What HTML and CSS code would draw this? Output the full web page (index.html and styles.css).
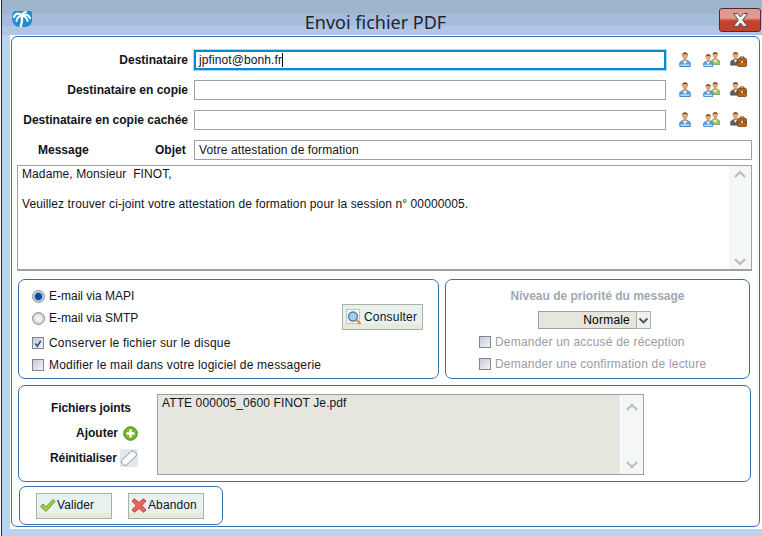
FILE: index.html
```html
<!DOCTYPE html>
<html lang="fr">
<head>
<meta charset="utf-8">
<title>Envoi fichier PDF</title>
<link rel="stylesheet" href="styles.css">
</head>
<body>
<svg class="defs" width="0" height="0">
  <defs>
    <symbol id="p-blue" viewBox="0 0 12 16">
      <path d="M.8 15.500V11.500L3.500 9.500H8.500L11.200 11.500V15.500Z" fill="#5aa4e8" stroke="#2f6db4" stroke-width=".8"/>
      <path d="M3.800 9.500H8.200L6 13.500Z" fill="#f4faff"/>
      <path d="M1.500 13.500H10.500V14.800H1.500Z" fill="#cfe6fa"/>
      <rect x="4.500" y="7" width="3" height="3" fill="#c98f62"/>
      <ellipse cx="6" cy="4.500" rx="2.800" ry="3.300" fill="#e0a878"/>
      <path d="M3 5C2.400 .2 9.600 .2 9 5L8 3H4Z" fill="#6b3d18"/>
    </symbol>
    <symbol id="p-green" viewBox="0 0 12 16">
      <path d="M.8 15.500V11.500L3.500 9.500H8.500L11.200 11.500V15.500Z" fill="#9cc874" stroke="#679140" stroke-width=".8"/>
      <path d="M3.800 9.500H8.200L6 13.500Z" fill="#f6fbf0"/>
      <rect x="4.500" y="7" width="3" height="3" fill="#c98f62"/>
      <ellipse cx="6" cy="4.500" rx="2.800" ry="3.300" fill="#e0a878"/>
      <path d="M3 5C2.400 .2 9.600 .2 9 5L8 3H4Z" fill="#6b3d18"/>
    </symbol>
    <symbol id="p-dark" viewBox="0 0 12 16">
      <path d="M.8 15.500V11.500L3.500 9.500H8.500L11.200 11.500V15.500Z" fill="#5e6064" stroke="#44464a" stroke-width=".8"/>
      <path d="M4.200 9.500H7.800L6 12.800Z" fill="#f4f4f4"/>
      <rect x="4.500" y="7" width="3" height="3" fill="#c98f62"/>
      <ellipse cx="6" cy="4.500" rx="2.800" ry="3.300" fill="#e0a878"/>
      <path d="M3 5C2.400 .2 9.600 .2 9 5L8 3H4Z" fill="#6b3d18"/>
    </symbol>
    <symbol id="i-user" viewBox="0 0 12 16"><use href="#p-blue"/></symbol>
    <symbol id="i-group" viewBox="0 0 17 16">
      <use href="#p-green" x="7" y="0" width="10.500" height="14"/>
      <use href="#p-blue" x="0" y="2" width="10.500" height="14"/>
    </symbol>
    <symbol id="i-pro" viewBox="0 0 17 16">
      <use href="#p-dark" x="0" y="0" width="11" height="14.700"/>
      <rect x="7.500" y="7.500" width="9" height="8" rx="1" fill="#b4661e" stroke="#7c4310" stroke-width=".8"/>
      <path d="M10 7.500V6H14V7.500" fill="none" stroke="#6b3a10"/>
      <rect x="7.500" y="10.500" width="9" height="1" fill="#7c4310"/>
      <rect x="11" y="10" width="2" height="2" fill="#f0cc7c"/>
    </symbol>
  </defs>
</svg>
<div class="window">
  <header class="titlebar">
    <svg class="logo" width="20" height="18" viewBox="0 0 20 18">
      <path d="M3 1H18Q20 1 20 3V10C20 14 17 17 13 17H8C3 17 0 13 0 8 0 4 1 1 3 1Z" fill="#1a8ed4"/>
      <g fill="none" stroke="#fff" stroke-linecap="round">
        <path d="M10 6C7 2.500 3.500 3 2 7" stroke-width="2.200"/>
        <path d="M10 6C7 6 5 8 4.500 11" stroke-width="2"/>
        <path d="M10 6C9.500 4 11 2.500 14 2" stroke-width="2"/>
        <path d="M10 6C13 3.500 16.500 4.500 18 8" stroke-width="2.200"/>
        <path d="M10 6C13 6 15 8.500 15.500 11" stroke-width="2"/>
        <path d="M10 6C10.300 10 10 13.500 8.500 17" stroke-width="2.400" stroke-linecap="butt"/>
      </g>
    </svg>
    <h1 class="title">Envoi fichier PDF</h1>
    <button class="close" type="button" aria-label="Fermer">
      <svg width="19" height="16" viewBox="0 0 19 16"><path d="M2.500 1.500H6.500L9.500 5 12.500 1.500H16.500L11.700 8 16.500 14.500H12.500L9.500 11 6.500 14.500H2.500L7.300 8Z" fill="#f4f4f0" stroke="#47515e" stroke-width="1"/></svg>
    </button>
  </header>
  <main class="sheet">
    <div class="frame">
      <div class="recipients">
        <label class="lbl">Destinataire</label>
        <div class="field focus">jpfinot@bonh.fr<span class="caret"></span></div>
        <div class="actions">
          <svg class="ic-user"><use href="#i-user"/></svg><svg class="ic-group"><use href="#i-group"/></svg><svg class="ic-pro"><use href="#i-pro"/></svg>
        </div>
        <label class="lbl">Destinataire en copie</label>
        <div class="field"></div>
        <div class="actions">
          <svg class="ic-user"><use href="#i-user"/></svg><svg class="ic-group"><use href="#i-group"/></svg><svg class="ic-pro"><use href="#i-pro"/></svg>
        </div>
        <label class="lbl">Destinataire en copie cachée</label>
        <div class="field"></div>
        <div class="actions">
          <svg class="ic-user"><use href="#i-user"/></svg><svg class="ic-group"><use href="#i-group"/></svg><svg class="ic-pro"><use href="#i-pro"/></svg>
        </div>
      </div>
      <div class="subject">
        <span class="lbl msg">Message</span>
        <span class="lbl obj">Objet</span>
        <div class="field wide">Votre attestation de formation</div>
      </div>
      <div class="message">
        <div class="message-text">Madame, Monsieur&nbsp; FINOT,

Veuillez trouver ci-joint votre attestation de formation pour la session n° 00000005.</div>
        <div class="scroll">
          <svg width="14" height="9" viewBox="0 0 14 9"><path d="M2 7L7 2 12 7" fill="none" stroke="#b4bcc4" stroke-width="2"/></svg>
          <svg width="14" height="9" viewBox="0 0 14 9"><path d="M2 2L7 7 12 2" fill="none" stroke="#b4bcc4" stroke-width="2"/></svg>
        </div>
      </div>
      <div class="options">
        <section class="box mail">
          <div class="opt tight"><span class="radio on"></span>E-mail via MAPI</div>
          <button class="btn consult" type="button">
            <svg width="18" height="18" viewBox="0 0 18 18"><rect x="1.500" y="1.500" width="13" height="14" fill="#f4f6f8" stroke="#a4aab4" stroke-dasharray="2 1"/><circle cx="8" cy="8.500" r="4.500" fill="#9cd0ec" stroke="#5a7c9c" stroke-width="1.400"/><path d="M11.500 12L15.500 16" stroke="#d8962c" stroke-width="2.400"/></svg>
            Consulter
          </button>
          <div class="opt tight"><span class="radio"></span>E-mail via SMTP</div>
          <div class="opt lower"><span class="check"><svg width="11" height="11" viewBox="0 0 11 11"><path d="M2.500 5.500L4.800 8.500 8.500 2.500" fill="none" stroke="#2f55a4" stroke-width="1.800"/></svg></span>Conserver le fichier sur le disque</div>
          <div class="opt lower"><span class="check"></span>Modifier le mail dans votre logiciel de messagerie</div>
        </section>
        <section class="box priority">
          <div class="pri-title">Niveau de priorité du message</div>
          <div class="select">
            <span class="select-value">Normale</span>
            <span class="select-arrow"><svg width="11" height="7" viewBox="0 0 11 7"><path d="M1.500 1.500L5.500 5.500 9.500 1.500" fill="none" stroke="#4a5460" stroke-width="1.800"/></svg></span>
          </div>
          <div class="dim-group">
            <div class="opt dim"><span class="check"></span>Demander un accusé de réception</div>
            <div class="opt dim"><span class="check"></span>Demander une confirmation de lecture</div>
          </div>
        </section>
      </div>
      <section class="box files">
        <div class="file-labels">
          <div class="lbl file-head">Fichiers joints</div>
          <div class="lbl file-add">Ajouter
            <svg width="15" height="15" viewBox="0 0 15 15"><circle cx="7.500" cy="7.500" r="6.800" fill="#74b82c" stroke="#4c8a18"/><path d="M7.500 3.500V11.500M3.500 7.500H11.500" stroke="#fff" stroke-width="2.600"/></svg>
          </div>
          <div class="lbl file-reset">Réinitialiser
            <span class="eraser"><svg width="18" height="18" viewBox="0 0 18 18"><path d="M1.500 11.500L11 2.500Q12.500 1.500 14 2.500L16 4.500Q17 6 16 7L6.500 16Q5 17 3.500 16L2 14.500Q.8 13 1.500 11.500Z" fill="#fbfbfb" stroke="#8c949c"/></svg></span>
          </div>
        </div>
        <div class="file-list">
          <div class="file-name">ATTE 000005_0600 FINOT Je.pdf</div>
          <div class="scroll">
            <svg width="14" height="9" viewBox="0 0 14 9"><path d="M2 7L7 2 12 7" fill="none" stroke="#b4bcc4" stroke-width="2"/></svg>
            <svg width="14" height="9" viewBox="0 0 14 9"><path d="M2 2L7 7 12 2" fill="none" stroke="#b4bcc4" stroke-width="2"/></svg>
          </div>
        </div>
      </section>
      <section class="box footer">
        <button class="btn action" type="button">
          <svg width="17" height="15" viewBox="0 0 17 15"><path d="M1.500 8.500L4 6 7 9 14 1.500 16 3.500 7 13.500Z" fill="#a4cc44" stroke="#6c9a28"/></svg>
          Valider
        </button>
        <button class="btn action" type="button">
          <svg width="16" height="15" viewBox="0 0 16 15"><path d="M1 3L3.500 .8 8 4.500 12.500 .8 15 3 11 7.500 15 12 12.500 14.300 8 10.500 3.500 14.300 1 12 5 7.500Z" fill="#e8645c" stroke="#c04840"/></svg>
          Abandon
        </button>
      </section>
    </div>
  </main>
</div>
</body>
</html>
```
FILE: styles.css
```css
* { box-sizing: border-box; }
html, body { margin: 0; padding: 0; }
body {
  width: 762px;
  height: 536px;
  overflow: hidden;
  background: #fff;
  font: 12px/15px "Liberation Sans", Arial, sans-serif;
  color: #10141c;
}
.defs { position: absolute; }
.window {
  height: 536px;
  margin-left: 1px;
  border-left: 1px solid #20242c;
  display: flex;
  flex-direction: column;
  background: #b9d5f0;
}
.titlebar {
  height: 35px;
  flex: none;
  display: flex;
  align-items: flex-start;
  background: linear-gradient(#9db5cd 0 14px, #a5bcdc 14px 26px, #b3c5e5 26px);
}
.logo { margin: 10px 0 0 10px; flex: none; }
.title {
  flex: 1;
  margin: 10px 0 0;
  text-align: center;
  font: 400 18px/24px "Noto Sans", "Open Sans", sans-serif;
  color: #20242c;
}
.close {
  width: 42px;
  height: 24px;
  margin: 8px 1px 0 0;
  padding: 0;
  border: 1px solid #4c2a3c;
  border-radius: 3px;
  background: linear-gradient(#e29a8c 0 9px, #c2402c 12px);
  display: flex;
  align-items: center;
  justify-content: center;
}
.sheet {
  flex: 1;
  margin: 0 0 7px 8px;
  padding: 1px 2px 2px 1px;
  background: #fff;
  min-height: 0;
}
.frame {
  height: 100%;
  border: 1px solid #3a70b2;
  border-radius: 6px;
  padding: 13px 7px 0 6px;
}
.recipients {
  display: grid;
  grid-template-columns: 170px 472px auto;
  column-gap: 6px;
  row-gap: 10px;
  grid-auto-rows: 20px;
  align-items: center;
}
.lbl { font-weight: 700; text-align: right; color: #10141c; white-space: nowrap; }
.field {
  height: 20px;
  border: 1px solid #a39ea6;
  background: #fff;
  padding: 2px 4px;
  line-height: 15px;
  white-space: nowrap;
  letter-spacing: .1px;
}
.field.focus {
  border: 2px solid #0a8ad0;
  box-shadow: 0 0 0 1px #a8d6f0;
  padding: 1px 3px;
}
.caret { display: inline-block; width: 1px; height: 14px; background: #000; vertical-align: -3px; }
.actions {
  display: flex;
  align-items: center;
  height: 20px;
  padding: 0 0 2px 7px;
}
.actions svg { flex: none; }
.ic-user { width: 12px; height: 16px; margin-right: 12px; }
.ic-group { width: 17px; height: 16px; margin-right: 10px; }
.ic-pro { width: 17px; height: 16px; }
.subject {
  display: flex;
  align-items: center;
  margin-top: 10px;
  height: 20px;
}
.msg { margin-left: 20px; width: 52px; text-align: left; }
.obj { margin-left: 65px; width: 30px; text-align: left; }
.wide { margin-left: 9px; width: 558px; }
.message {
  display: flex;
  margin-top: 5px;
  height: 106px;
  margin-left: -1px;
  width: 735px;
  border: 1px solid #a39ea6;
  border-bottom-width: 2px;
}
.message-text {
  flex: 1;
  padding: 1px 4px 0;
  white-space: pre-line;
  line-height: 15px;
  letter-spacing: .1px;
}
.scroll {
  width: 22px;
  flex: none;
  background: #f5f6f6;
  display: flex;
  flex-direction: column;
  justify-content: space-between;
  align-items: center;
  padding: 4px 0 3px;
}
.options {
  display: flex;
  gap: 6px;
  margin-top: 8px;
}
.box {
  border: 1px solid #3a70b2;
  border-radius: 7px;
  background: #fff;
}
.mail {
  width: 421px;
  height: 100px;
  display: grid;
  grid-template-columns: 1fr auto;
  grid-auto-rows: 22px;
  padding: 5px 15px 0 13px;
}
.opt {
  display: flex;
  align-items: center;
  grid-column: 1;
  height: 22px;
  white-space: nowrap;
  letter-spacing: .2px;
}
.opt.tight { letter-spacing: 0; }
.lower { margin-top: 3px; }
.radio {
  width: 13px;
  height: 13px;
  margin-right: 4px;
  border-radius: 50%;
  border: 1px solid #8c8c90;
  background: radial-gradient(circle, #f0f0f0 0 3px, #d8d8d8 4px);
  flex: none;
}
.radio.on { background: radial-gradient(circle, #0c4c9c 0 3px, #7cacd4 4px, #dcdcdc 5px); }
.check {
  width: 12px;
  height: 12px;
  margin: 0 5px 0 0;
  border: 1px solid #84848c;
  background: linear-gradient(135deg, #c4ccd8, #f4f4f6);
  flex: none;
  display: flex;
  align-items: center;
  justify-content: center;
}
.btn {
  font: inherit;
  color: #10141c;
  border: 1px solid #a6b69c;
  padding: 0;
  display: flex;
  align-items: center;
  background: linear-gradient(#e8f0f0 0 19px, #e8e8dc 19px);
  letter-spacing: .1px;
}
.consult {
  grid-column: 2;
  grid-row: 1 / span 2;
  align-self: end;
  margin-bottom: -1px;
  width: 81px;
  height: 26px;
  padding-left: 2px;
  gap: 1px;
  letter-spacing: .2px;
}
.priority {
  width: 305px;
  height: 100px;
  padding: 5px 0 0 33px;
}
.pri-title {
  height: 22px;
  line-height: 22px;
  margin-left: -33px;
  text-align: center;
  font-weight: 700;
  color: #a2a8b2;
}
.select {
  width: 113px;
  height: 18px;
  margin: 4px 0 0 59px;
  display: flex;
  border: 1px solid #a39ea6;
  background: #e6e6dc;
}
.select-value { flex: 1; text-align: right; padding-right: 6px; line-height: 16px; color: #000; letter-spacing: .2px; }
.select-arrow {
  width: 15px;
  margin: -1px -1px -1px 0;
  border: 1px solid #a6b69c;
  background: #eef2ee;
  display: flex;
  align-items: center;
  justify-content: center;
}
.dim-group { margin-top: 2px; }
.dim { color: #9c9ca2; }
.dim .check { margin-right: 4px; }
.files {
  width: 733px;
  height: 97px;
  margin-top: 6px;
  display: flex;
  padding: 8px 0 0 0;
}
.file-labels { width: 138px; flex: none; display: flex; flex-direction: column; }
.lbl.file-head { margin: 7px 0 0 32px; text-align: left; letter-spacing: -.1px; }
.lbl.file-add { margin: 10px 0 0 57px; display: flex; align-items: center; gap: 5px; text-align: left; }
.lbl.file-reset { margin: 8px 0 0 31px; display: flex; align-items: center; gap: 3px; text-align: left; letter-spacing: -.1px; }
.eraser { width: 18px; height: 18px; display: block; background: #e4e8ec; }
.file-list {
  width: 487px;
  height: 81px;
  display: flex;
  border: 1px solid #a39ea6;
  background: #e6e6de;
}
.file-name { flex: 1; padding: 1px 4px; letter-spacing: .1px; border-right: 1px solid #fff; }
.files .scroll { padding: 8px 0 5px; }
.footer {
  width: 204px;
  height: 39px;
  margin: 4px 0 0 1px;
  display: flex;
  align-items: center;
  gap: 16px;
  padding-left: 16px;
}
.action { width: 76px; height: 26px; padding-left: 2px; gap: 1px; }
```
